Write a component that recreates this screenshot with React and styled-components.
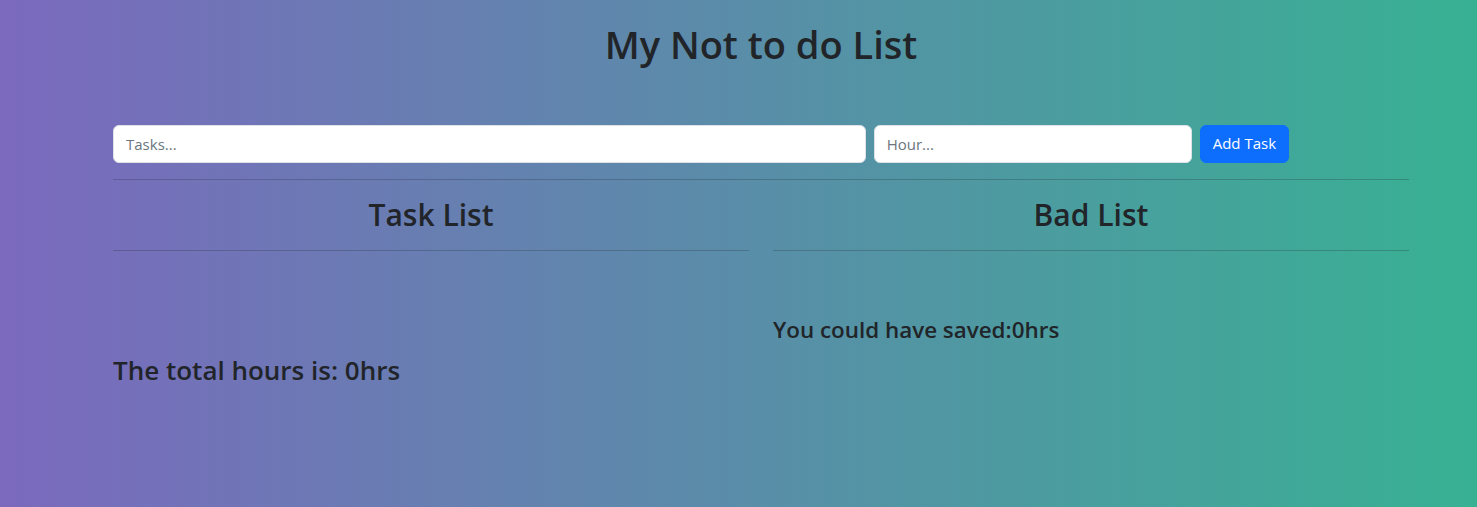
import React, { useState } from "react";
import styled, { createGlobalStyle } from "styled-components";

const GlobalStyle = createGlobalStyle`
    * {
        box-sizing: border-box;
    }

    body {
        margin: 0;
        font-family: "Open Sans", "Noto Sans", sans-serif;
        color: #212529;
    }
`;

function App() {
    const [task, setTask] = useState("");
    const [hour, setHour] = useState("");
    const [tasks, setTasks] = useState([]);

    const goodHours = tasks.filter((t) => !t.bad).reduce((acc, t) => acc + t.hr, 0);
    const badHours = tasks.filter((t) => t.bad).reduce((acc, t) => acc + t.hr, 0);

    function handleSubmit(e) {
        e.preventDefault();
        if (!task) return;
        setTasks([...tasks, { task, hr: Number(hour) || 0, bad: false }]);
        setTask("");
        setHour("");
    }

    return (
        <Page>
            <GlobalStyle />
            <Container>
                <Title>My Not to do List</Title>

                <TaskForm onSubmit={handleSubmit}>
                    <FormCol $span={7}>
                        <Input
                            type="text"
                            placeholder="Tasks..."
                            value={task}
                            onChange={(e) => setTask(e.target.value)}
                        />
                    </FormCol>
                    <FormCol $span={3}>
                        <Input
                            type="number"
                            placeholder="Hour..."
                            value={hour}
                            onChange={(e) => setHour(e.target.value)}
                        />
                    </FormCol>
                    <FormCol $span={2}>
                        <Button type="submit">Add Task</Button>
                    </FormCol>
                </TaskForm>

                <Divider />

                <ListRow>
                    <ListCol>
                        <ListTitle>Task List</ListTitle>
                        <Divider />
                        <TaskTable>
                            <tbody>
                                {tasks.filter((t) => !t.bad).map((t, i) => (
                                    <tr key={i}>
                                        <td>{t.task}</td>
                                        <td>{t.hr}hrs</td>
                                    </tr>
                                ))}
                            </tbody>
                        </TaskTable>
                        <Total $size={26} $top={88}>The total hours is: {goodHours}hrs</Total>
                    </ListCol>

                    <ListCol>
                        <ListTitle>Bad List</ListTitle>
                        <Divider />
                        <TaskTable>
                            <tbody>
                                {tasks.filter((t) => t.bad).map((t, i) => (
                                    <tr key={i}>
                                        <td>{t.task}</td>
                                        <td>{t.hr}hrs</td>
                                    </tr>
                                ))}
                            </tbody>
                        </TaskTable>
                        <Total $size={22.4} $top={50}>You could have saved:{badHours}hrs</Total>
                    </ListCol>
                </ListRow>
            </Container>
        </Page>
    );
}

export default App;

const Page = styled.div`
    display: flex;
    justify-content: center;
    min-height: 100vh;
    padding: 22px 0 0 45px;
    background: linear-gradient(90deg, #7b69be 0%, #38b193 100%);
`;

const Container = styled.div`
    width: 1320px;
    padding: 0 12px;
`;

const Title = styled.h1`
    margin: 0 0 8px;
    font-size: 38px;
    font-weight: 600;
    line-height: 1.2;
    text-align: center;
`;

const TaskForm = styled.form`
    display: flex;
    margin: 57px -4px 0;
`;

const FormCol = styled.div`
    flex: 0 0 ${(props) => (props.$span / 12) * 100}%;
    padding: 0 4px;
`;

const Input = styled.input`
    display: block;
    width: 100%;
    height: 38px;
    padding: 6px 12px;
    font-family: inherit;
    font-size: 15px;
    line-height: 1.5;
    color: #212529;
    background-color: #fff;
    border: 1px solid #dee2e6;
    border-radius: 6px;
    appearance: textfield;

    &::placeholder {
        color: #6c757d;
    }

    &::-webkit-outer-spin-button,
    &::-webkit-inner-spin-button {
        -webkit-appearance: none;
        margin: 0;
    }
`;

const Button = styled.button`
    height: 38px;
    padding: 6px 12px;
    font-family: inherit;
    font-size: 15px;
    line-height: 1.5;
    color: #fff;
    background-color: #0d6efd;
    border: 1px solid #0d6efd;
    border-radius: 6px;
    cursor: pointer;
`;

const Divider = styled.hr`
    margin: 16px 0;
    border: 0;
    border-top: 1px solid #212529;
    opacity: 0.25;
`;

const ListRow = styled.div`
    display: grid;
    grid-template-columns: 1fr 1fr;
    column-gap: 24px;
`;

const ListCol = styled.div`
    display: flex;
    flex-direction: column;
`;

const ListTitle = styled.h2`
    margin: 0;
    font-size: 30px;
    font-weight: 600;
    line-height: 38px;
    text-align: center;
`;

const TaskTable = styled.table`
    width: 100%;
    border-collapse: collapse;
`;

const Total = styled.h3`
    margin: ${(props) => props.$top}px 0 8px;
    font-size: ${(props) => props.$size}px;
    font-weight: 600;
    line-height: 1.2;
`;
